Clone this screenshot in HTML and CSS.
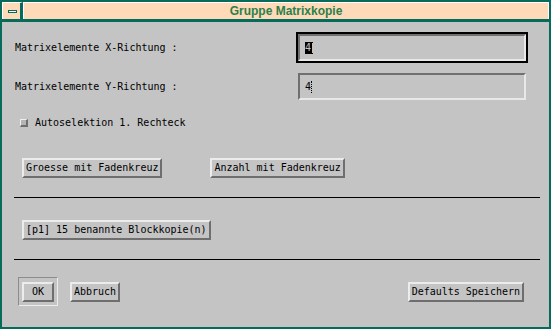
FILE: index.html
```html
<!DOCTYPE html>
<html>
<head>
<meta charset="utf-8">
<link rel="stylesheet" href="styles.css">
</head>
<body>
<div class="window">
  <div class="titlebar">
    <div class="menubtn"><span class="menuicon"></span></div>
    <div class="title">Gruppe Matrixkopie</div>
  </div>
  <div class="content">
    <div class="field-row row-x">
      <span class="label">Matrixelemente X-Richtung :</span>
      <div class="field focused"><span class="sel">4</span><span class="ibeam"></span></div>
    </div>
    <div class="field-row row-y">
      <span class="label">Matrixelemente Y-Richtung :</span>
      <div class="field"><span class="val">4</span><span class="dotcaret"></span></div>
    </div>
    <div class="check-row">
      <span class="checkbox"></span>
      <span class="label">Autoselektion 1. Rechteck</span>
    </div>
    <div class="btn-row">
      <button class="btn">Groesse mit Fadenkreuz</button>
      <button class="btn second">Anzahl mit Fadenkreuz</button>
    </div>
    <div class="sep sep1"></div>
    <div class="block-row">
      <button class="btn">[p1] 15 benannte Blockkopie(n)</button>
    </div>
    <div class="sep sep2"></div>
    <div class="action-row">
      <div class="default-ring"><button class="btn ok">OK</button></div>
      <button class="btn">Abbruch</button>
      <div class="spacer"></div>
      <button class="btn">Defaults Speichern</button>
    </div>
  </div>
</div>
</body>
</html>
```

FILE: styles.css
```css
html, body {
  margin: 0;
  padding: 0;
  background: #ffffff;
}

.window {
  width: 551px;
  height: 329px;
  box-sizing: border-box;
  border: 2px solid #066b5b;
  display: flex;
  flex-direction: column;
  background: #c4c4c4;
  font-family: "DejaVu Sans Mono", "Liberation Mono", monospace;
  font-size: 10px;
  color: #000;
}

.titlebar {
  height: 20px;
  box-sizing: border-box;
  border-bottom: 3px solid #066b5b;
  display: flex;
  flex: none;
}

.menubtn {
  width: 21px;
  box-sizing: border-box;
  background: #ffdab9;
  border-top: 1px solid #ffffff;
  border-left: 1px solid #ffffff;
  border-right: 3px solid #066b5b;
  display: flex;
  align-items: center;
  justify-content: center;
}

.menuicon {
  display: block;
  width: 9px;
  height: 3px;
  box-sizing: border-box;
  border: 1px solid #066b5b;
  background: #ffffff;
  margin-left: 1px;
  margin-top: 1px;
}

.title {
  flex: 1;
  background: #ffdab9;
  border-top: 1px solid #ffffff;
  border-left: 1px solid #ffffff;
  border-right: 1px solid #ffffff;
  font-family: "Liberation Sans", Arial, sans-serif;
  font-weight: bold;
  font-size: 12px;
  line-height: 16px;
  color: #2b7f4b;
  text-align: center;
}

.content {
  flex: 1;
  display: flex;
  flex-direction: column;
  padding-top: 10px;
}

.field-row {
  display: grid;
  grid-template-columns: 283px 228px;
  align-items: center;
  height: 31px;
  padding-left: 13px;
}

.row-y {
  margin-top: 8px;
}

.label {
  white-space: pre;
  line-height: 12px;
}

.field {
  height: 27px;
  box-sizing: border-box;
  border-style: solid;
  border-width: 2px;
  border-color: #707070 #e8e8e8 #e8e8e8 #707070;
  background: #c4c4c4;
  display: flex;
  align-items: center;
  padding-left: 5px;
}

.field.focused {
  outline: 2px solid #000000;
}

.sel {
  background: #000000;
  color: #c4c4c4;
  line-height: 12px;
}

.ibeam {
  display: block;
  width: 3px;
  height: 12px;
  box-sizing: border-box;
  border-top: 1px solid #000;
  border-bottom: 1px solid #000;
  background: linear-gradient(#000, #000) center / 1px 100% no-repeat;
  margin-left: -1px;
}

.val {
  line-height: 12px;
}

.dotcaret {
  display: block;
  width: 1px;
  height: 12px;
  border-left: 1px dotted #000;
}

.check-row {
  display: flex;
  align-items: center;
  height: 19px;
  margin-top: 11px;
  padding-left: 18px;
}

.checkbox {
  width: 8px;
  height: 8px;
  box-sizing: border-box;
  border-style: solid;
  border-width: 1px 2px 2px 1px;
  border-color: #eeeeee #6e6e6e #6e6e6e #eeeeee;
  background: #b4b4b4;
  margin-right: 7px;
}

.btn {
  font-family: "DejaVu Sans Mono", "Liberation Mono", monospace;
  font-size: 10px;
  color: #000;
  height: 20px;
  box-sizing: border-box;
  line-height: 16px;
  padding: 0 2px;
  margin: 0;
  background: #c4c4c4;
  border-style: solid;
  border-width: 2px;
  border-color: #ececec #6e6e6e #6e6e6e #ececec;
  border-radius: 0;
  white-space: pre;
}

.btn-row {
  display: flex;
  margin-top: 26px;
  padding-left: 20px;
}

.btn-row .second {
  margin-left: 48px;
}

.sep {
  height: 1px;
  background: #000000;
  margin-left: 12px;
  margin-right: 9px;
}

.sep1 {
  margin-top: 19px;
}

.block-row {
  display: flex;
  margin-top: 22px;
  padding-left: 20px;
}

.sep2 {
  margin-top: 19px;
}

.action-row {
  display: flex;
  align-items: center;
  margin-top: 17px;
  height: 29px;
  padding-left: 16px;
  padding-right: 25px;
}

.default-ring {
  box-sizing: border-box;
  height: 29px;
  border-style: solid;
  border-width: 1px;
  border-color: #8c8c8c #ececec #ececec #8c8c8c;
  padding: 4px 3px 3px 3px;
  margin-right: 12px;
  display: flex;
}

.btn.ok {
  width: 32px;
  text-align: center;
}

.spacer {
  flex: 1;
}
```
